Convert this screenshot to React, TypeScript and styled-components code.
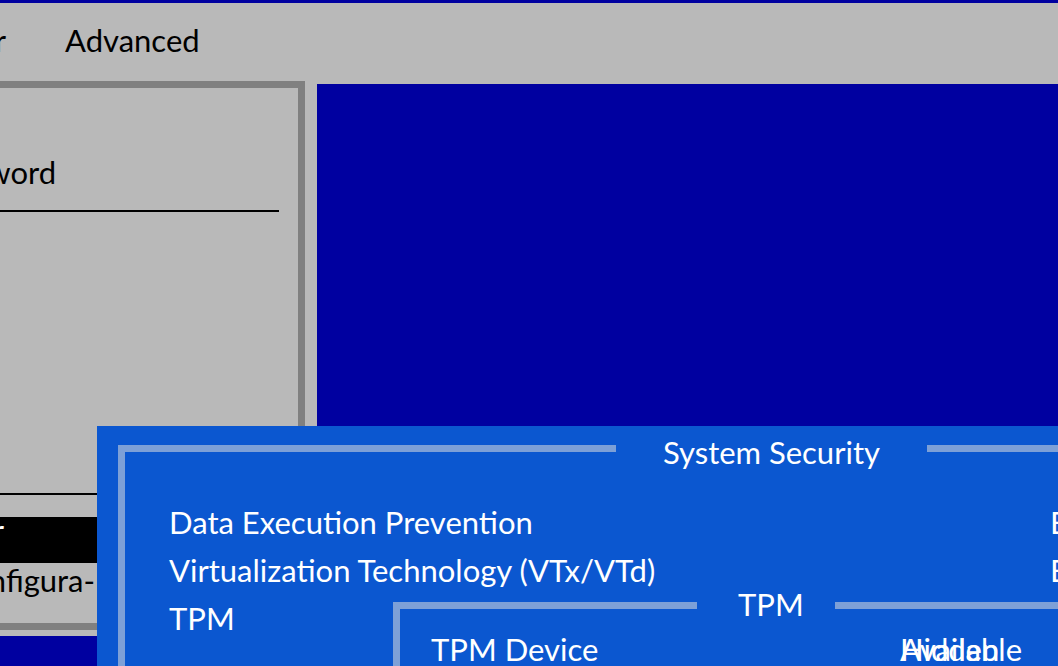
import React from 'react';
import styled, { createGlobalStyle } from 'styled-components';

const GlobalStyle = createGlobalStyle`
  html, body {
    margin: 0;
    padding: 0;
  }
  body {
    background: #b9b9b9;
    font-family: Lato, "Noto Sans", sans-serif;
    overflow: hidden;
  }
`;

const Screen = styled.div`
  position: relative;
  width: 1058px;
  height: 666px;
  overflow: hidden;
  background: #b9b9b9;
  display: flex;
  flex-direction: column;
`;

const TopStripe = styled.div`
  height: 3px;
  flex: none;
  background: #0000a0;
`;

const MenuBar = styled.nav`
  height: 78px;
  flex: none;
  box-sizing: border-box;
  padding-top: 17px;
  display: flex;
  align-items: flex-start;
  font-size: 31px;
  line-height: 40px;
  color: #000;
`;

// text whose start runs off the left edge; only its right end is shown
const Clipped = styled.span<{ $edge: number }>`
  width: ${(p) => p.$edge}px;
  flex: none;
  display: flex;
  justify-content: flex-end;
  white-space: nowrap;
`;

const MenuItem = styled.span`
  margin-left: 59px;
  white-space: nowrap;
`;

const Workspace = styled.div`
  flex: 1;
  min-height: 0;
  display: flex;
  gap: 12px;
`;

const LeftColumn = styled.div`
  width: 305px;
  flex: none;
  display: flex;
  flex-direction: column;
`;

const ItemPanel = styled.section`
  height: 549px;
  flex: none;
  box-sizing: border-box;
  border: 7px solid #808080;
  border-left: none;
  display: flex;
  flex-direction: column;
  font-size: 31px;
  color: #000;
`;

const PanelRow = styled.div<{ $top: number; $height: number }>`
  margin-top: ${(p) => p.$top}px;
  height: ${(p) => p.$height}px;
  line-height: ${(p) => p.$height}px;
  display: flex;
  white-space: nowrap;
`;

const Divider = styled.div<{ $top: number; $width: number }>`
  margin-top: ${(p) => p.$top}px;
  width: ${(p) => p.$width}px;
  height: 2px;
  background: #000;
`;

const Highlight = styled.div`
  margin-top: 22px;
  height: 46px;
  background: #000;
  color: #fff;
  display: flex;
  line-height: 26px;
`;

const BottomBar = styled.div`
  margin-top: 6px;
  flex: 1;
  background: #0000a0;
`;

const HelpPane = styled.div`
  flex: 1;
  margin-top: 3px;
  background: #0000a0;
`;

const Dialog = styled.div`
  position: absolute;
  left: 97px;
  top: 426px;
  width: 1100px;
  height: 400px;
  background: #0b57d0;
  color: #fff;
  font-size: 31px;
`;

const Frame = styled.div<{ $line: string }>`
  box-sizing: border-box;
  border-left: 7px solid ${(p) => p.$line};
  display: flex;
  flex-direction: column;
`;

const SecurityFrame = styled(Frame)`
  margin: 19px 0 0 21px;
  height: 400px;
`;

const TpmFrame = styled(Frame)`
  position: absolute;
  left: 296px;
  top: 176px;
  width: 900px;
  height: 300px;
  background: #0b57d0;
`;

const TitleRow = styled.div`
  height: 7px;
  margin-left: -7px;
  display: flex;
  align-items: center;
  flex: none;
`;

const TitleLine = styled.div<{ $line: string; $width?: number }>`
  height: 7px;
  background: ${(p) => p.$line};
  ${(p) => (p.$width ? `width: ${p.$width}px; flex: none;` : 'flex: 1;')}
`;

const Title = styled.span<{ $left: number; $right: number; $drop: number }>`
  padding: 0 ${(p) => p.$right}px 0 ${(p) => p.$left}px;
  margin-top: ${(p) => p.$drop}px;
  line-height: 40px;
  white-space: nowrap;
`;

const SettingList = styled.div<{ $top: number; $left: number }>`
  padding: ${(p) => p.$top}px 0 0 ${(p) => p.$left}px;
  display: flex;
  flex-direction: column;
`;

const Setting = styled.div<{ $labelWidth: number }>`
  display: grid;
  grid-template-columns: ${(p) => p.$labelWidth}px auto;
  height: 48px;
  line-height: 48px;
  white-space: nowrap;
`;

// two values painted into the same cell
const ValueStack = styled.span`
  display: grid;
  & > span {
    grid-area: 1 / 1;
  }
`;

const LINE = '#7da0d7';

const securityItems: [string, string][] = [
  ['Data Execution Prevention', 'Enable'],
  ['Virtualization Technology (VTx/VTd)', 'Enable'],
  ['TPM', ''],
];

export default function App() {
  return (
    <>
      <GlobalStyle />
      <Screen>
        <TopStripe />
        <MenuBar>
          <Clipped $edge={6}>Power</Clipped>
          <MenuItem>Advanced</MenuItem>
        </MenuBar>
        <Workspace>
          <LeftColumn>
            <ItemPanel>
              <PanelRow $top={64} $height={40}>
                <Clipped $edge={56}>Password</Clipped>
              </PanelRow>
              <Divider $top={18} $width={279} />
              <Divider $top={281} $width={298} />
              <Highlight>
                <Clipped $edge={4}>Security Configur</Clipped>
              </Highlight>
              <PanelRow $top={0} $height={34}>
                <Clipped $edge={95}>Configura-</Clipped>
              </PanelRow>
            </ItemPanel>
            <BottomBar />
          </LeftColumn>
          <HelpPane />
        </Workspace>

        <Dialog>
          <SecurityFrame $line={LINE}>
            <TitleRow>
              <TitleLine $line={LINE} $width={498} />
              <Title $left={47} $right={47} $drop={6}>System Security</Title>
              <TitleLine $line={LINE} />
            </TitleRow>
            <SettingList $top={46} $left={44}>
              {securityItems.map(([label, value]) => (
                <Setting key={label} $labelWidth={881}>
                  <span>{label}</span>
                  <span>{value}</span>
                </Setting>
              ))}
            </SettingList>
          </SecurityFrame>

          <TpmFrame $line={LINE}>
            <TitleRow>
              <TitleLine $line={LINE} $width={304} />
              <Title $left={41} $right={31} $drop={-4}>TPM</Title>
              <TitleLine $line={LINE} />
            </TitleRow>
            <SettingList $top={16} $left={31}>
              <Setting $labelWidth={469}>
                <span>TPM Device</span>
                <ValueStack>
                  <span>Available</span>
                  <span>Hidden</span>
                </ValueStack>
              </Setting>
            </SettingList>
          </TpmFrame>
        </Dialog>
      </Screen>
    </>
  );
}
